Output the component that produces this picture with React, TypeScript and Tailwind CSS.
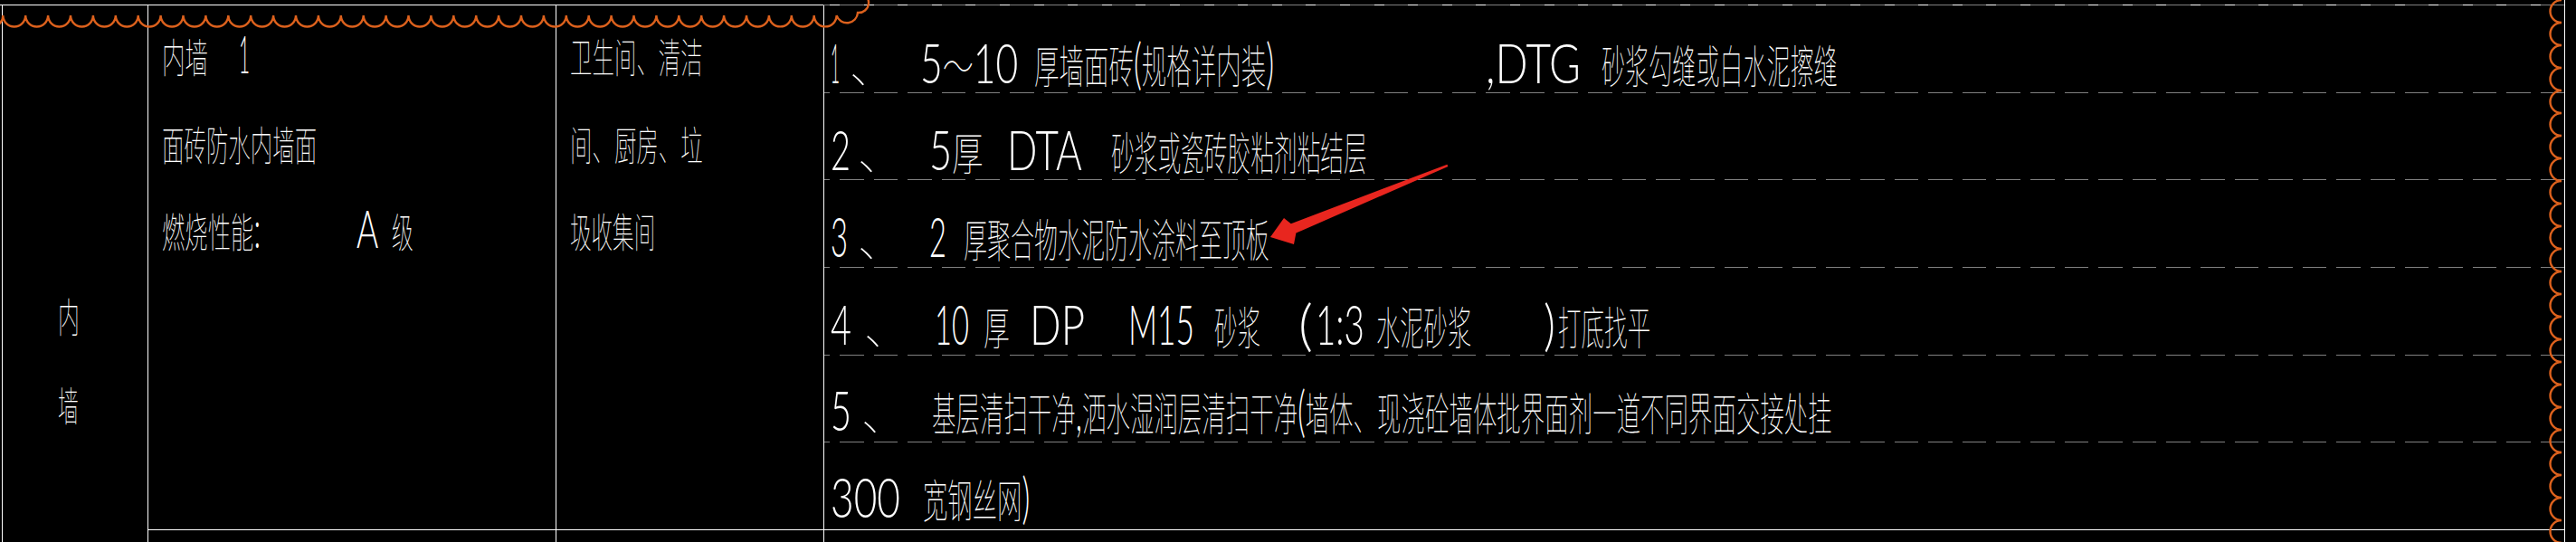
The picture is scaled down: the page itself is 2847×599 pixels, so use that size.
import React, { useLayoutEffect, useRef, useState } from "react";
import clsx from "clsx";

function Fit({ c, children }: { c: string; children: React.ReactNode }) {
  const outer = useRef<HTMLDivElement>(null);
  const inner = useRef<HTMLSpanElement>(null);
  const [k, setK] = useState(1);
  useLayoutEffect(() => {
    const measure = () => {
      const o = outer.current;
      const i = inner.current;
      if (!o || !i) return;
      const nat = i.offsetWidth;
      if (nat > 0) setK(o.clientWidth / nat);
    };
    measure();
    if (document.fonts) document.fonts.ready.then(measure);
  }, []);
  return (
    <div ref={outer} className={clsx("shrink-0 leading-none whitespace-nowrap", c)}>
      <span ref={inner} className="inline-block origin-left" style={{ transform: `scaleX(${k})` }}>
        {children}
      </span>
    </div>
  );
}

const C = ({ children }: { children: React.ReactNode }) => (
  <span className="text-[0.8em] font-thin font-['Noto_Sans_CJK_SC',sans-serif]">{children}</span>
);

function Dash() {
  return (
    <div className="h-px shrink-0 bg-[image:repeating-linear-gradient(90deg,#808080_0px,#808080_6px,transparent_6px,transparent_17px,#808080_17px,#808080_37.6px)]" />
  );
}

function Overlay() {
  let top = "M -21.6 17";
  for (let k = 0; k <= 37; k++) {
    const x = 3.3 + 24.9 * k;
    top += ` A 12.45 12.45 0 0 0 ${x.toFixed(2)} 17`;
  }
  top += " A 12 12 0 0 0 948 14 A 11 11 0 0 0 950 -8";
  let right = "M 2831 -25";
  for (let k = 0; k <= 24; k++) {
    right += ` A 12.5 12.5 0 0 0 2831 ${25 * k}`;
  }
  return (
    <svg className="absolute inset-0 pointer-events-none" width={2847} height={599} viewBox="0 0 2847 599">
      <path d={top} fill="none" stroke="#dc611d" strokeWidth={2.4} />
      <path d={right} fill="none" stroke="#dc611d" strokeWidth={2.4} />
      <polygon
        points="1404,262 1419,241 1426.8,247.2 1599.4,181.8 1600.4,184 1432.4,257.6 1430,270"
        fill="#e8261f"
      />
    </svg>
  );
}

export default function App() {
  return (
    <div className="relative flex w-[2847px] h-[599px] overflow-hidden bg-black text-white font-light font-['Lato','Noto_Sans_CJK_SC',sans-serif]">
      <div className="flex flex-col w-[2834px] h-full pt-[5px]">
        {/* top border */}
        <div className="flex h-px shrink-0">
          <div className="w-[910px] bg-white" />
          <div className="flex-1 bg-white bg-[image:repeating-linear-gradient(90deg,#808080_0px,#808080_7px,transparent_7px,transparent_18px,#808080_18px,#808080_37.6px)]" />
        </div>
        {/* body */}
        <div className="flex flex-1">
          <div className="w-[2px] shrink-0" />
          {/* column 1 */}
          <div className="flex flex-col w-[161px] shrink-0 border-l border-white pt-[312px] text-[57px]">
            <div className="flex items-baseline h-[98px]">
              <Fit c="ml-[61px] w-[24px]"><C>内</C></Fit>
            </div>
            <div className="flex items-baseline">
              <Fit c="ml-[61px] w-[23px]"><C>墙</C></Fit>
            </div>
          </div>
          {/* column 2 */}
          <div className="flex flex-col w-[451px] shrink-0 border-l border-white">
            <div className="flex flex-col h-[579px] pt-[25px] text-[57px]">
              <div className="flex items-baseline h-[97px]">
                <Fit c="ml-[15px] w-[51px]"><C>内墙</C></Fit>
                <Fit c="ml-[34px] w-[12px]">1</Fit>
              </div>
              <div className="flex items-baseline h-[96px]">
                <Fit c="ml-[15px] w-[171px]"><C>面砖防水内墙面</C></Fit>
              </div>
              <div className="flex items-baseline h-[96px]">
                <Fit c="ml-[15px] w-[109px]"><C>燃烧性能</C>:</Fit>
                <Fit c="ml-[106px] w-[24px]">A</Fit>
                <Fit c="ml-[15px] w-[24px]"><C>级</C></Fit>
              </div>
            </div>
            <div className="h-px bg-white shrink-0" />
            <div className="flex-1" />
          </div>
          {/* column 3 */}
          <div className="flex flex-col w-[296px] shrink-0 border-l border-white">
            <div className="flex flex-col h-[579px] pt-[25px] text-[57px]">
              <div className="flex items-baseline h-[97px]">
                <Fit c="ml-[15px] w-[147px]"><C>卫生间、清洁</C></Fit>
              </div>
              <div className="flex items-baseline h-[96px]">
                <Fit c="ml-[15px] w-[147px]"><C>间、厨房、垃</C></Fit>
              </div>
              <div className="flex items-baseline h-[96px]">
                <Fit c="ml-[15px] w-[94px]"><C>圾收集间</C></Fit>
              </div>
            </div>
            <div className="h-px bg-white shrink-0" />
            <div className="flex-1" />
          </div>
          {/* column 4 */}
          <div className="flex flex-col flex-1 border-l border-white text-[62px]">
            <div className="flex items-baseline h-[96px] pt-[31px] shrink-0">
              <Fit c="ml-[7px] w-[10px]">1</Fit>
              <Fit c="ml-[11px] w-[50px]"><C>、</C></Fit>
              <Fit c="ml-[28px] w-[108px]">5<C>～</C>10</Fit>
              <Fit c="ml-[18px] w-[265px]"><C>厚墙面砖</C>(<C>规格详内装</C>)</Fit>
              <Fit c="ml-[234px] w-[105px]">,DTG</Fit>
              <Fit c="ml-[23px] w-[261px]"><C>砂浆勾缝或白水泥擦缝</C></Fit>
            </div>
            <Dash />
            <div className="flex items-baseline h-[95px] pt-[30px] shrink-0">
              <Fit c="ml-[7px] w-[22px]">2</Fit>
              <Fit c="ml-[8px] w-[50px]"><C>、</C></Fit>
              <Fit c="ml-[29px] w-[60px]">5<C>厚</C></Fit>
              <Fit c="ml-[26px] w-[83px]">DTA</Fit>
              <Fit c="ml-[32px] w-[283px]"><C>砂浆或瓷砖胶粘剂粘结层</C></Fit>
            </div>
            <Dash />
            <div className="flex items-baseline h-[96px] pt-[30px] shrink-0">
              <Fit c="ml-[7px] w-[19px]">3</Fit>
              <Fit c="ml-[11px] w-[50px]"><C>、</C></Fit>
              <Fit c="ml-[29px] w-[19px]">2</Fit>
              <Fit c="ml-[19px] w-[338px]"><C>厚聚合物水泥防水涂料至顶板</C></Fit>
            </div>
            <Dash />
            <div className="flex items-baseline h-[96px] pt-[30px] shrink-0">
              <Fit c="ml-[7px] w-[23px]">4</Fit>
              <Fit c="ml-[14px] w-[50px]"><C>、</C></Fit>
              <Fit c="ml-[28px] w-[38px]">10</Fit>
              <Fit c="ml-[16px] w-[29px]"><C>厚</C></Fit>
              <Fit c="ml-[22px] w-[61px]">DP</Fit>
              <Fit c="ml-[48px] w-[73px]">M15</Fit>
              <Fit c="ml-[22px] w-[51px]"><C>砂浆</C></Fit>
              <Fit c="ml-[42px] w-[16px]">(</Fit>
              <Fit c="ml-[3px] w-[54px]">1:3</Fit>
              <Fit c="ml-[13px] w-[105px]"><C>水泥砂浆</C></Fit>
              <Fit c="ml-[80px] w-[13px]">)</Fit>
              <Fit c="ml-[3px] w-[102px]"><C>打底找平</C></Fit>
            </div>
            <Dash />
            <div className="flex items-baseline h-[95px] pt-[28px] shrink-0">
              <Fit c="ml-[7px] w-[23px]">5</Fit>
              <Fit c="ml-[11px] w-[50px]"><C>、</C></Fit>
              <Fit c="ml-[28px] w-[995px]">
                <C>基层清扫干净</C>,<C>洒水湿润层清扫干净</C>(<C>墙体、现浇砼墙体批界面剂一道不同界面交接处挂</C>
              </Fit>
            </div>
            <Dash />
            <div className="flex items-baseline h-[96px] pt-[28px] shrink-0">
              <Fit c="ml-[7px] w-[77px]">300</Fit>
              <Fit c="ml-[25px] w-[118px]"><C>宽钢丝网</C>)</Fit>
            </div>
            <div className="h-px bg-white shrink-0" />
            <div className="flex-1" />
          </div>
        </div>
      </div>
      <div className="w-px h-full bg-white shrink-0" />
      <Overlay />
    </div>
  );
}
